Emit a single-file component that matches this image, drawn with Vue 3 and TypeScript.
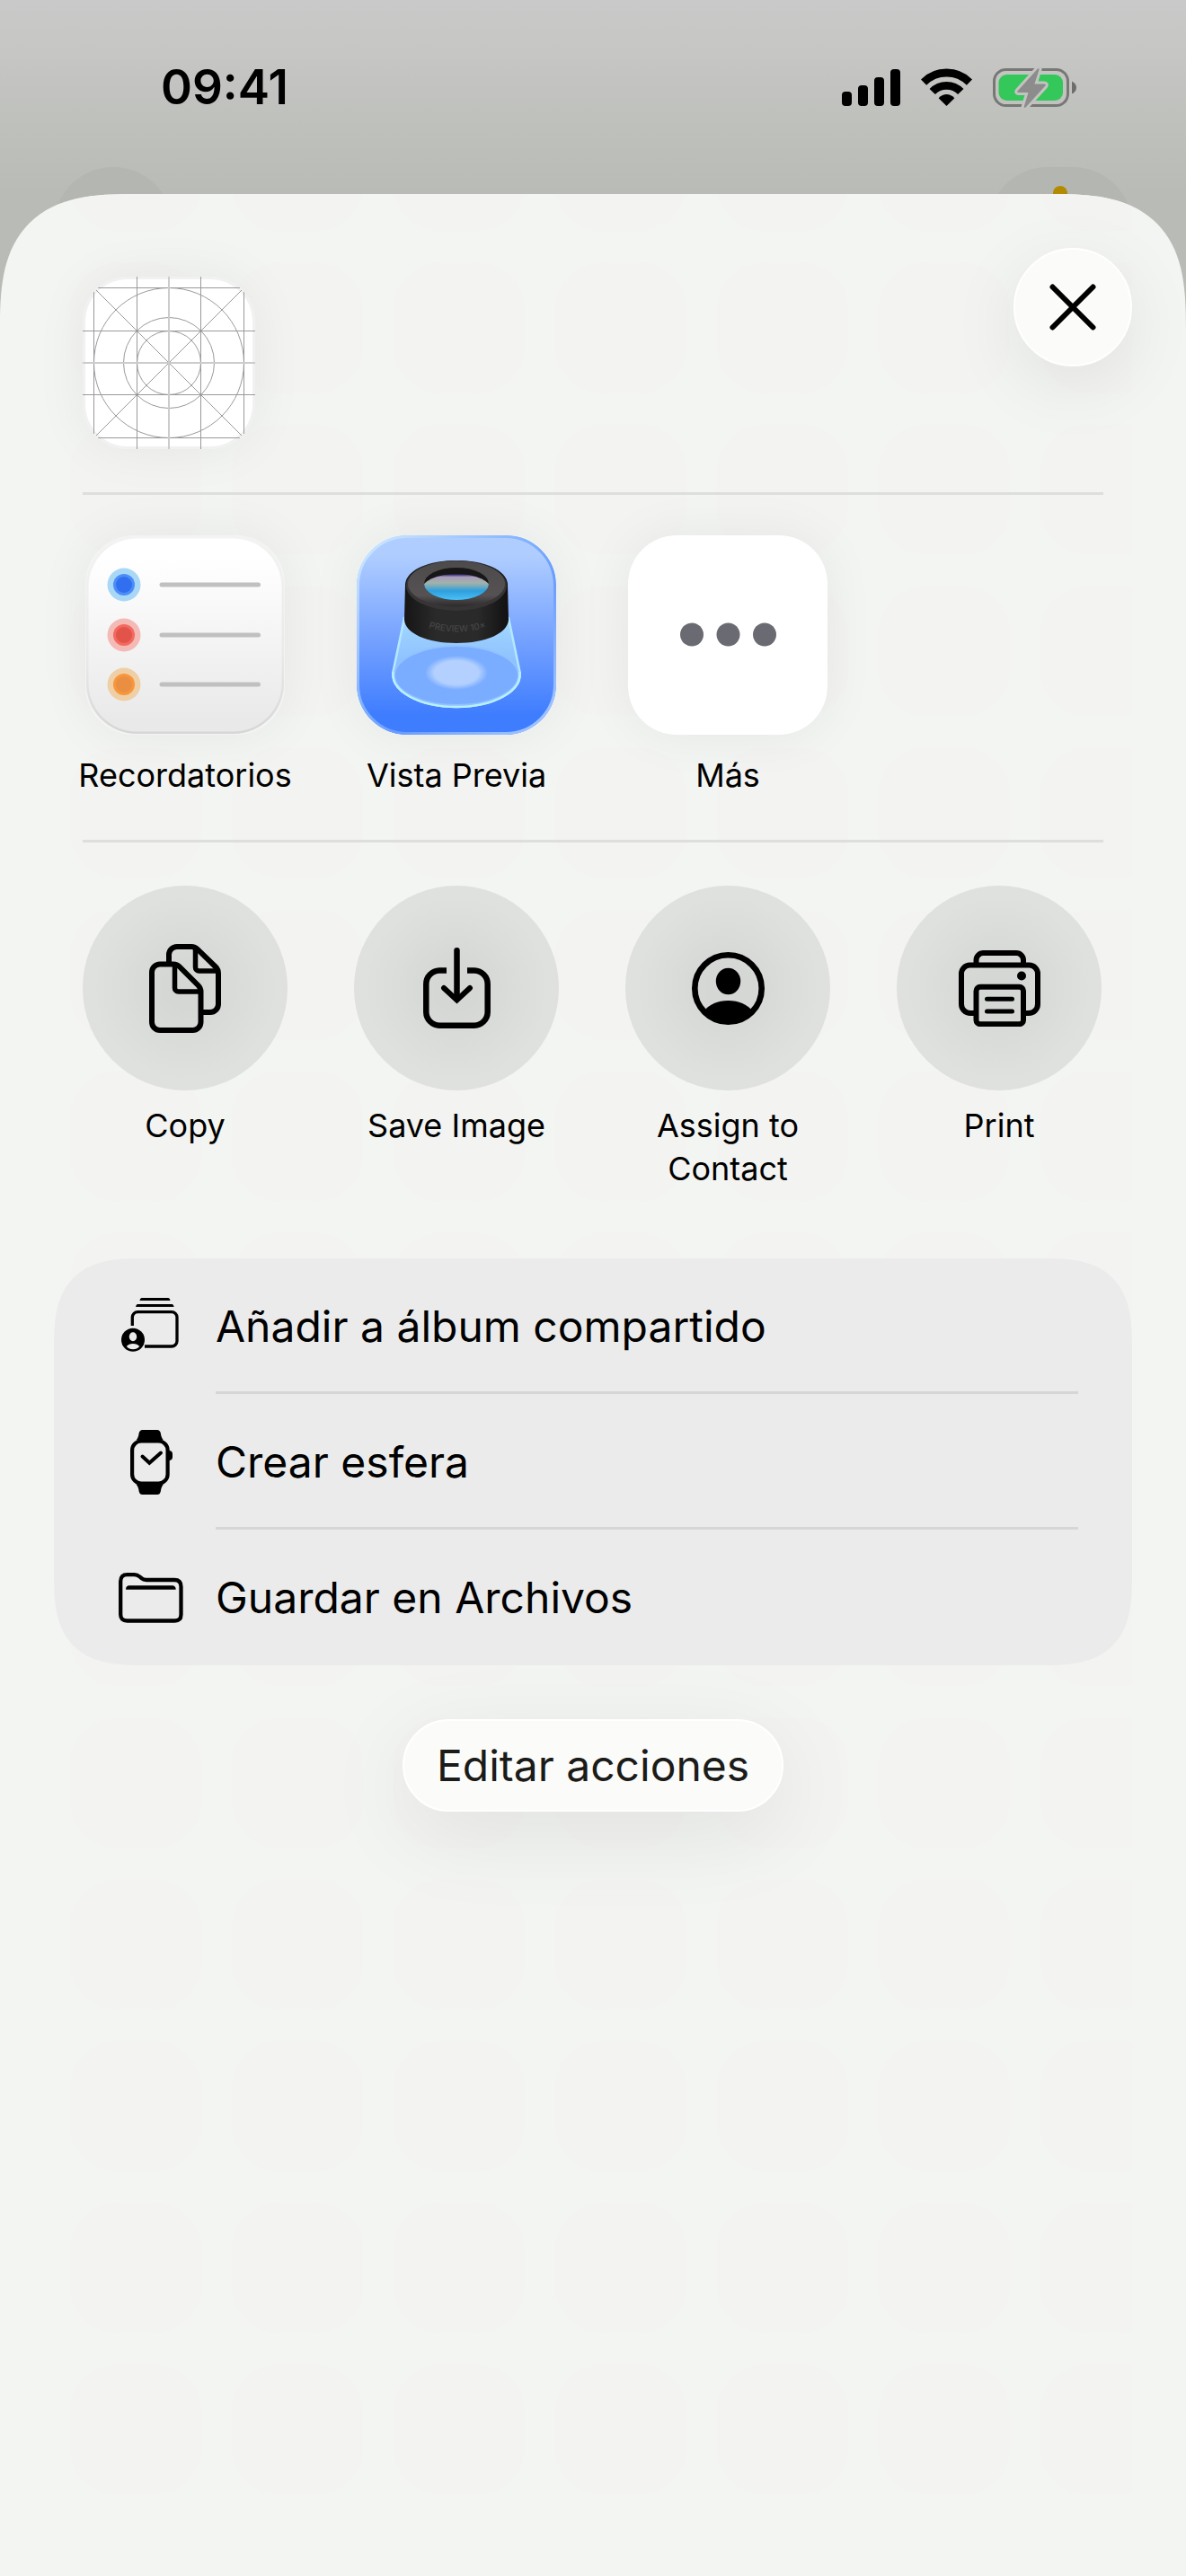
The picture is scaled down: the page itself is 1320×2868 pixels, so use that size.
<script setup lang="ts">
interface Item {
  id: string
  label: string
}

const time = '09:41'

const apps: Item[] = [
  { id: 'reminders', label: 'Recordatorios' },
  { id: 'preview', label: 'Vista Previa' },
  { id: 'more', label: 'Más' },
]

const actions: Item[] = [
  { id: 'copy', label: 'Copy' },
  { id: 'save', label: 'Save Image' },
  { id: 'contact', label: 'Assign to Contact' },
  { id: 'print', label: 'Print' },
]

const rows: Item[] = [
  { id: 'album', label: 'Añadir a álbum compartido' },
  { id: 'watch', label: 'Crear esfera' },
  { id: 'folder', label: 'Guardar en Archivos' },
]

const reminderDots = [
  { y: 55, halo: '#a9d8f7', ring: '#4d8df8', core: '#2f6ff0' },
  { y: 111, halo: '#f3bab6', ring: '#f4695f', core: '#e2544a' },
  { y: 166, halo: '#efcfa6', ring: '#f7963c', core: '#ea8f42' },
]
</script>

<template>
  <div class="screen">
    <header class="status">
      <time class="clock">{{ time }}</time>
      <div class="indicators">
        <svg width="65" height="41" viewBox="0 0 65 41" aria-hidden="true">
          <rect x="0" y="25" width="11" height="16" rx="4" />
          <rect x="18" y="18" width="11" height="23" rx="4" />
          <rect x="36" y="9" width="11" height="32" rx="4" />
          <rect x="54" y="0" width="11" height="41" rx="4" />
        </svg>
        <svg width="57" height="42" viewBox="0 0 57 42" aria-hidden="true">
          <g fill="none" stroke="#000" stroke-width="8.8">
            <path d="M3 15.6A36 36 0 0 1 54 15.6" />
            <path d="M12.7 26A22 22 0 0 1 44.3 26" />
          </g>
          <path d="M19.6 33.2Q28.5 25 37.4 33.2L28.5 42z" />
        </svg>
        <svg width="93" height="45" viewBox="0 0 93 45" aria-hidden="true">
          <rect x="1.5" y="2.5" width="82" height="40" rx="13" fill="none" stroke="#777876" stroke-width="3" />
          <rect x="6.5" y="8" width="71.5" height="29" rx="9" fill="#34c759" />
          <path d="M88 15.5Q93 18 93 22.5T88 29.5z" fill="#6d6e6c" />
          <path
            d="M50 1.5L27.6 26.2Q26.6 28 28.6 28H39.5L34.6 44.2Q35.4 45.4 36.8 44.2L58.4 20.6Q59.6 18.8 57.4 18.6H46.4L51.6 2.2Q51.2.6 50 1.5z"
            fill="#8b8c8b" stroke="#c3c4c1" stroke-width="6" stroke-linejoin="round" paint-order="stroke"
          />
        </svg>
      </div>
    </header>

    <div class="nav" aria-hidden="true">
      <span class="nav-circle"></span>
      <span class="nav-pill"><span class="nav-mark"></span></span>
    </div>

    <main class="sheet">
      <svg class="tiles" aria-hidden="true">
        <defs>
          <pattern id="tile" x="0" y="77" width="180" height="180" patternUnits="userSpaceOnUse">
            <rect width="146" height="144" rx="52" fill="#f3f3f1" />
          </pattern>
        </defs>
        <rect width="100%" height="2560" fill="url(#tile)" />
      </svg>

      <div class="top">
        <svg class="document" width="192" height="192" viewBox="0 0 192 192" role="img" aria-label="Imagen">
          <rect width="192" height="192" rx="50" fill="#f1f1f1" />
          <rect x="3" y="3" width="186" height="186" rx="47" fill="#fff" />
          <g fill="none" stroke="#999">
            <path d="M12.5 17V175M60.5 0V192M131.5 0V192M179.5 17V175" />
            <path d="M17 12.5H175M0 60.5H192M0 131.5H192M17 179.5H175" />
            <path d="M15 15L177 177M177 15L15 177" />
            <circle cx="96" cy="96" r="35.5" />
            <circle cx="96" cy="96" r="50.5" />
            <circle cx="96" cy="96" r="83.5" />
            <path d="M96 0V192M0 96H192" stroke="#ccc" stroke-width="2" />
          </g>
        </svg>
        <button class="close" type="button" aria-label="Cerrar">
          <svg width="52" height="52" viewBox="0 0 52 52" aria-hidden="true">
            <path d="M3.5 3.5L48.5 48.5M48.5 3.5L3.5 48.5" fill="none" stroke="#000" stroke-width="6" stroke-linecap="round" />
          </svg>
        </button>
      </div>

      <hr class="rule" />

      <section class="grid apps">
        <button v-for="app in apps" :key="app.id" class="cell" type="button">
          <svg v-if="app.id === 'reminders'" class="app-icon" viewBox="0 0 222 222" aria-hidden="true">
            <defs>
              <linearGradient id="paper" x1="0" y1="0" x2="0" y2="1">
                <stop offset="0.1" stop-color="#fff" />
                <stop offset="0.95" stop-color="#e9e9e9" />
              </linearGradient>
              <linearGradient id="paper-edge" x1="0" y1="0" x2="0" y2="1">
                <stop offset="0" stop-color="#f3f3f3" />
                <stop offset="0.6" stop-color="#eaeaea" />
                <stop offset="1" stop-color="#d6d6d6" />
              </linearGradient>
            </defs>
            <rect x="1" y="1" width="220" height="220" rx="56" fill="url(#paper-edge)" />
            <rect x="3.5" y="3.5" width="215" height="215" rx="54" fill="url(#paper)" />
            <g v-for="dot in reminderDots" :key="dot.y">
              <circle cx="43" :cy="dot.y" r="18.5" :fill="dot.halo" />
              <circle cx="43" :cy="dot.y" r="12" :fill="dot.ring" />
              <circle cx="43" :cy="dot.y" r="9" :fill="dot.core" />
              <path :d="`M85 ${dot.y}H192.5`" stroke="#c0c0c0" stroke-width="5" stroke-linecap="round" />
            </g>
          </svg>

          <svg v-else-if="app.id === 'preview'" class="app-icon" viewBox="0 0 222 222" aria-hidden="true">
            <defs>
              <linearGradient id="sky" x1="0" y1="0" x2="0" y2="1">
                <stop offset="0.1" stop-color="#afcdff" />
                <stop offset="0.55" stop-color="#719fff" />
                <stop offset="0.9" stop-color="#3f7dff" />
              </linearGradient>
              <linearGradient id="sky-edge" x1="0" y1="0" x2="1" y2="1">
                <stop offset="0" stop-color="#d3ecff" />
                <stop offset="0.45" stop-color="#7fb0ff" />
                <stop offset="0.6" stop-color="#6a9cff" />
                <stop offset="1" stop-color="#a9ccff" />
              </linearGradient>
              <linearGradient id="cone" x1="0" y1="0" x2="0" y2="1">
                <stop offset="0" stop-color="#a5d8ff" />
                <stop offset="1" stop-color="#73aaff" />
              </linearGradient>
              <linearGradient id="barrel" x1="0" y1="0" x2="1" y2="0">
                <stop offset="0" stop-color="#151515" />
                <stop offset="0.3" stop-color="#2b2a2a" />
                <stop offset="0.7" stop-color="#2b2a2a" />
                <stop offset="1" stop-color="#111" />
              </linearGradient>
              <linearGradient id="rim" x1="0" y1="0" x2="0" y2="1">
                <stop offset="0" stop-color="#4d4a4b" />
                <stop offset="0.75" stop-color="#565254" />
                <stop offset="1" stop-color="#2c2a2b" />
              </linearGradient>
              <linearGradient id="lens" x1="0" y1="43" x2="0" y2="72" gradientUnits="userSpaceOnUse">
                <stop offset="0" stop-color="#1c1450" />
                <stop offset="0.12" stop-color="#a79dbd" />
                <stop offset="0.35" stop-color="#a3b2a8" />
                <stop offset="0.65" stop-color="#2d9fdd" />
                <stop offset="1" stop-color="#4cc0f8" />
              </linearGradient>
              <radialGradient id="spot">
                <stop offset="0.7" stop-color="#b3d0ff" />
                <stop offset="1" stop-color="#b3d0ff" stop-opacity="0" />
              </radialGradient>
              <clipPath id="lens-hole"><ellipse cx="111" cy="54" rx="36" ry="18" /></clipPath>
            </defs>
            <rect width="222" height="222" rx="56" fill="url(#sky)" />
            <rect x="1.5" y="1.5" width="219" height="219" rx="54.5" fill="none" stroke="url(#sky-edge)" stroke-width="3" />
            <path d="M53 92L40.500 152C38 174 70 191 111 191S184 174 181.500 152L169 92z" fill="url(#cone)" stroke="#b4e8ff" stroke-width="2.5" />
            <ellipse cx="111" cy="156" rx="69" ry="33" fill="#7aadff" stroke="#92c2ff" stroke-width="2" />
            <path d="M40.500 152C38 174 70 191 111 191S184 174 181.500 152" fill="none" stroke="#b9f0ff" stroke-width="2.5" />
            <ellipse cx="111" cy="153" rx="35" ry="19" fill="url(#spot)" />
            <path d="M54 54C56 38 80 28 111 28S166 38 168 54L169 94C168 109 144 120 111 120S54 109 53 94z" fill="url(#barrel)" />
            <ellipse cx="111" cy="56" rx="56" ry="28" fill="#363435" />
            <ellipse cx="111" cy="54" rx="54" ry="25.5" fill="url(#rim)" />
            <ellipse cx="111" cy="54" rx="36" ry="18" fill="#181718" />
            <ellipse cx="111" cy="61" rx="39" ry="18" fill="url(#lens)" clip-path="url(#lens-hole)" />
            <path id="engraving" d="M77 102Q111 113 147 102" fill="none" />
            <text class="engraving"><textPath href="#engraving" startOffset="50%" text-anchor="middle">PREVIEW 10×</textPath></text>
          </svg>

          <svg v-else class="app-icon" viewBox="0 0 222 222" aria-hidden="true">
            <rect width="222" height="222" rx="54" fill="#fff" />
            <g fill="#6a6a73">
              <circle cx="71" cy="110.5" r="13" />
              <circle cx="111.5" cy="110.5" r="13" />
              <circle cx="152" cy="110.5" r="13" />
            </g>
          </svg>
          <span class="label">{{ app.label }}</span>
        </button>
      </section>

      <hr class="rule" />

      <section class="grid actions">
        <button v-for="action in actions" :key="action.id" class="cell" type="button">
          <span class="disc">
            <svg v-if="action.id === 'copy'" width="80" height="99" viewBox="0 0 80 99" class="line" aria-hidden="true">
              <path d="M22 20V12A9 9 0 0 1 31 3H47Q51 3 54 6L74 25.5Q77 28.5 77 33V67A9 9 0 0 1 68 76H60" />
              <path d="M51.5 4V26A4 4 0 0 0 55.5 30H76" stroke-width="5.5" />
              <path d="M12 22.5H27Q31 22.5 34 25.5L54.5 46Q57.5 49 57.5 53V87A9 9 0 0 1 48.5 96H12A9 9 0 0 1 3 87V31.5A9 9 0 0 1 12 22.5z" />
              <path d="M28.5 23.5V49A4 4 0 0 0 32.5 53H56.5" stroke-width="5.5" />
            </svg>
            <svg v-else-if="action.id === 'save'" width="75" height="90" viewBox="0 0 75 90" class="line" aria-hidden="true">
              <path d="M26 25.5H18A15 15 0 0 0 3.3 40.5V72A15 15 0 0 0 18 86.7H57A15 15 0 0 0 71.7 72V40.5A15 15 0 0 0 57 25.5H49" stroke-width="6.5" />
              <path d="M37.5 3.3V57" stroke-width="6.5" stroke-linecap="round" />
              <path d="M23 45L37.5 58.5L52 45" stroke-width="6" stroke-linecap="round" />
            </svg>
            <svg v-else-if="action.id === 'contact'" width="81" height="81" viewBox="0 0 81 81" aria-hidden="true">
              <circle cx="40.5" cy="40.5" r="37.2" fill="none" stroke="#000" stroke-width="6.6" />
              <ellipse cx="40.5" cy="32.5" rx="13.7" ry="14.8" />
              <path d="M13 66Q23 54 40.5 54T68 66A37 37 0 0 1 13 66z" />
            </svg>
            <svg v-else width="91" height="85" viewBox="0 0 91 85" class="line" aria-hidden="true">
              <path d="M19.5 16V11A8 8 0 0 1 27.5 3H64A8 8 0 0 1 72 11V16" />
              <path d="M18 70H13A10 10 0 0 1 3 60V26A9.5 9.5 0 0 1 12.5 16.5H78.5A9.5 9.5 0 0 1 88 26V60A10 10 0 0 1 78 70H73" />
              <rect x="19.5" y="40.7" width="52.5" height="41.5" rx="4.5" />
              <path d="M31.5 54.3H59.5M31.5 68H59.5" stroke-width="5" stroke-linecap="round" />
              <circle cx="70" cy="28.5" r="5" fill="#000" stroke="none" />
            </svg>
          </span>
          <span class="label">{{ action.label }}</span>
        </button>
      </section>

      <ul class="card">
        <li v-for="row in rows" :key="row.id">
          <button class="row" type="button">
            <span class="row-icon">
              <svg v-if="row.id === 'album'" width="66" height="64" viewBox="0 0 66 64" aria-hidden="true">
                <path d="M23 0H52Q54 0 54.5 3H20.5Q21 0 23 0zM18 7H56.5Q58 7 58.7 10H16Q16.7 7 18 7z" />
                <path d="M12.3 31V21.6A6 6 0 0 1 18.3 15.6H56A6 6 0 0 1 62 21.6V48A6 6 0 0 1 56 54H26" fill="none" stroke="#000" stroke-width="3.3" />
                <circle cx="13" cy="46.8" r="13" />
                <ellipse cx="13" cy="43.3" rx="4.2" ry="5" fill="#ebebeb" />
                <path d="M5.8 54Q8.300 51 13 51T20.300 54Q17.300 57.300 13 57.300T5.800 54z" fill="#ebebeb" />
              </svg>
              <svg v-else-if="row.id === 'watch'" width="47" height="72" viewBox="0 0 47 72" aria-hidden="true">
                <path d="M13.5 0H30Q33 0 33.8 3.5Q34.5 9 37 11.5H6.5Q9 9 9.700 3.500Q10.500 0 13.500 0zM13.500 72H30Q33 72 33.800 68.500Q34.500 63 37 60.500H6.500Q9 63 9.700 68.500Q10.500 72 13.500 72z" />
                <rect x="2.1" y="12.5" width="39.5" height="47" rx="10" fill="#ebebeb" stroke="#000" stroke-width="4.2" />
                <path d="M43 23Q47 23 47 27V30Q47 34 43 34z" />
                <path d="M13.5 29.5L21.3 36.7L34 25.5" fill="none" stroke="#000" stroke-width="4" stroke-linecap="round" />
              </svg>
              <svg v-else width="72" height="56" viewBox="0 0 72 56" fill="none" stroke="#000" stroke-width="4.3" aria-hidden="true">
                <path d="M9.5 2.2H17.5Q21 2.2 23.5 4.5L25.5 6.2Q27.5 8 31 8H62Q69.5 8 69.5 15.5V46.5Q69.5 53.5 62.5 53.5H9.5Q2.2 53.5 2.2 46.5V9.5Q2.2 2.2 9.5 2.2z" />
                <path d="M8 18.7Q8 14.2 12 14.2H59.7Q63.7 14.2 63.7 18.7z" fill="#000" stroke="none" />
              </svg>
            </span>
            <span class="row-text">{{ row.label }}</span>
          </button>
        </li>
      </ul>

      <button class="edit" type="button">Editar acciones</button>
    </main>
  </div>
</template>

<style>
body {
  margin: 0;
}
</style>

<style scoped>
.screen {
  display: flex;
  flex-direction: column;
  min-height: 100vh;
  background: linear-gradient(#c9c9c9 0, #c6c6c4 60px, #bfc1bd 130px, #b9bbb7 216px, #b9bbb7 100%);
  font-family: Inter, "Liberation Sans", sans-serif;
  color: #000;
}

button {
  margin: 0;
  padding: 0;
  border: 0;
  background: none;
  font: inherit;
  color: inherit;
}

svg {
  display: block;
  flex: none;
}

.status {
  display: flex;
  justify-content: space-between;
  box-sizing: border-box;
  height: 186px;
  padding: 65px 122px 0 179px;
}

.clock {
  font-size: 53px;
  font-weight: 600;
  line-height: 64px;
}

.indicators {
  display: flex;
  align-items: center;
  gap: 23px;
  height: 64px;
}

.nav {
  display: flex;
  justify-content: space-between;
  height: 132px;
  padding: 0 60px;
}

.nav-circle,
.nav-pill {
  width: 132px;
  border-radius: 66px;
  background: #b4b6b2;
}

.nav-pill {
  display: flex;
  justify-content: center;
  width: 160px;
}

.nav-mark {
  width: 16px;
  height: 40px;
  margin-top: 21px;
  border-radius: 8px;
  background: #b38b00;
}

.sheet {
  position: relative;
  display: flex;
  flex: 1;
  flex-direction: column;
  box-sizing: border-box;
  overflow: hidden;
  margin-top: -102px;
  padding: 60px 0;
  border-radius: 120px 120px 0 0;
  background: #f3f5f2;
}

@supports (corner-shape: superellipse(1.5)) {
  .sheet {
    border-radius: 150px 150px 0 0;
    corner-shape: superellipse(1.5);
  }
}

.sheet > * {
  position: relative;
}

.sheet > .tiles {
  position: absolute;
  top: 0;
  left: 78px;
  width: calc(100% - 138px);
  height: 100%;
}

.top {
  display: flex;
  align-items: flex-start;
  justify-content: space-between;
  padding: 0 60px 48px 92px;
}

.document {
  margin-top: 32px;
  border-radius: 50px;
  box-shadow: 0 0 60px rgba(0, 0, 0, 0.06);
}

.close {
  display: flex;
  align-items: center;
  justify-content: center;
  box-sizing: border-box;
  width: 132px;
  height: 132px;
  border: 2px solid #fff;
  border-radius: 50%;
  background: #fbfcfa;
  box-shadow: 0 20px 80px rgba(0, 0, 0, 0.08);
}

.rule {
  box-sizing: border-box;
  height: 3px;
  margin: 0 92px;
  border: 0;
  background: #dddfdc;
}

.grid {
  display: grid;
  grid-template-columns: repeat(4, minmax(0, 1fr));
  column-gap: 62px;
  padding: 45px 88px 48px 86px;
}

.actions {
  padding-top: 48px;
  padding-bottom: 76px;
}

.cell {
  display: flex;
  flex-direction: column;
  align-items: center;
}

.app-icon {
  width: 222px;
  height: 222px;
  margin-bottom: 6px;
  border-radius: 54px;
  box-shadow: 0 0 60px rgba(0, 0, 0, 0.06);
}

.engraving {
  fill: #454547;
  font-size: 10px;
  font-weight: 500;
}

.disc {
  display: flex;
  align-items: center;
  justify-content: center;
  width: 228px;
  height: 228px;
  border-radius: 50%;
  background: radial-gradient(circle closest-side, #d5d7d4 20%, #dbddda 60%, #dfe1de 90%);
}

.line {
  fill: none;
  stroke: #000;
  stroke-width: 6px;
}

.label {
  margin-top: 15px;
  font-size: 36px;
  line-height: 48px;
  text-align: center;
}

.card {
  margin: 0 60px;
  padding: 0;
  border-radius: 78px;
  background: #ebebeb;
  list-style: none;
}

@supports (corner-shape: superellipse(1.5)) {
  .card {
    border-radius: 100px;
    corner-shape: superellipse(1.5);
  }
}

.row {
  display: flex;
  gap: 36px;
  width: 100%;
  padding: 0 60px 0 72px;
  text-align: left;
}

.row-icon {
  display: flex;
  flex: none;
  align-items: center;
  justify-content: center;
  box-sizing: border-box;
  width: 72px;
  height: 148px;
  padding-top: 4px;
}

.row-text {
  flex: 1;
  padding-top: 4px;
  border-bottom: 3px solid #d6d6d6;
  font-size: 48px;
  line-height: 144px;
}

li:last-child .row-text {
  border-color: transparent;
}

.edit {
  align-self: center;
  box-sizing: border-box;
  height: 103px;
  margin-top: 60px;
  padding: 0 36px;
  border: 2px solid #fff;
  border-radius: 52px;
  background: #fbfcfa;
  box-shadow: 0 24px 100px rgba(0, 0, 0, 0.08);
  color: #1b1b19;
  font-size: 48px;
  line-height: 99px;
}
</style>
